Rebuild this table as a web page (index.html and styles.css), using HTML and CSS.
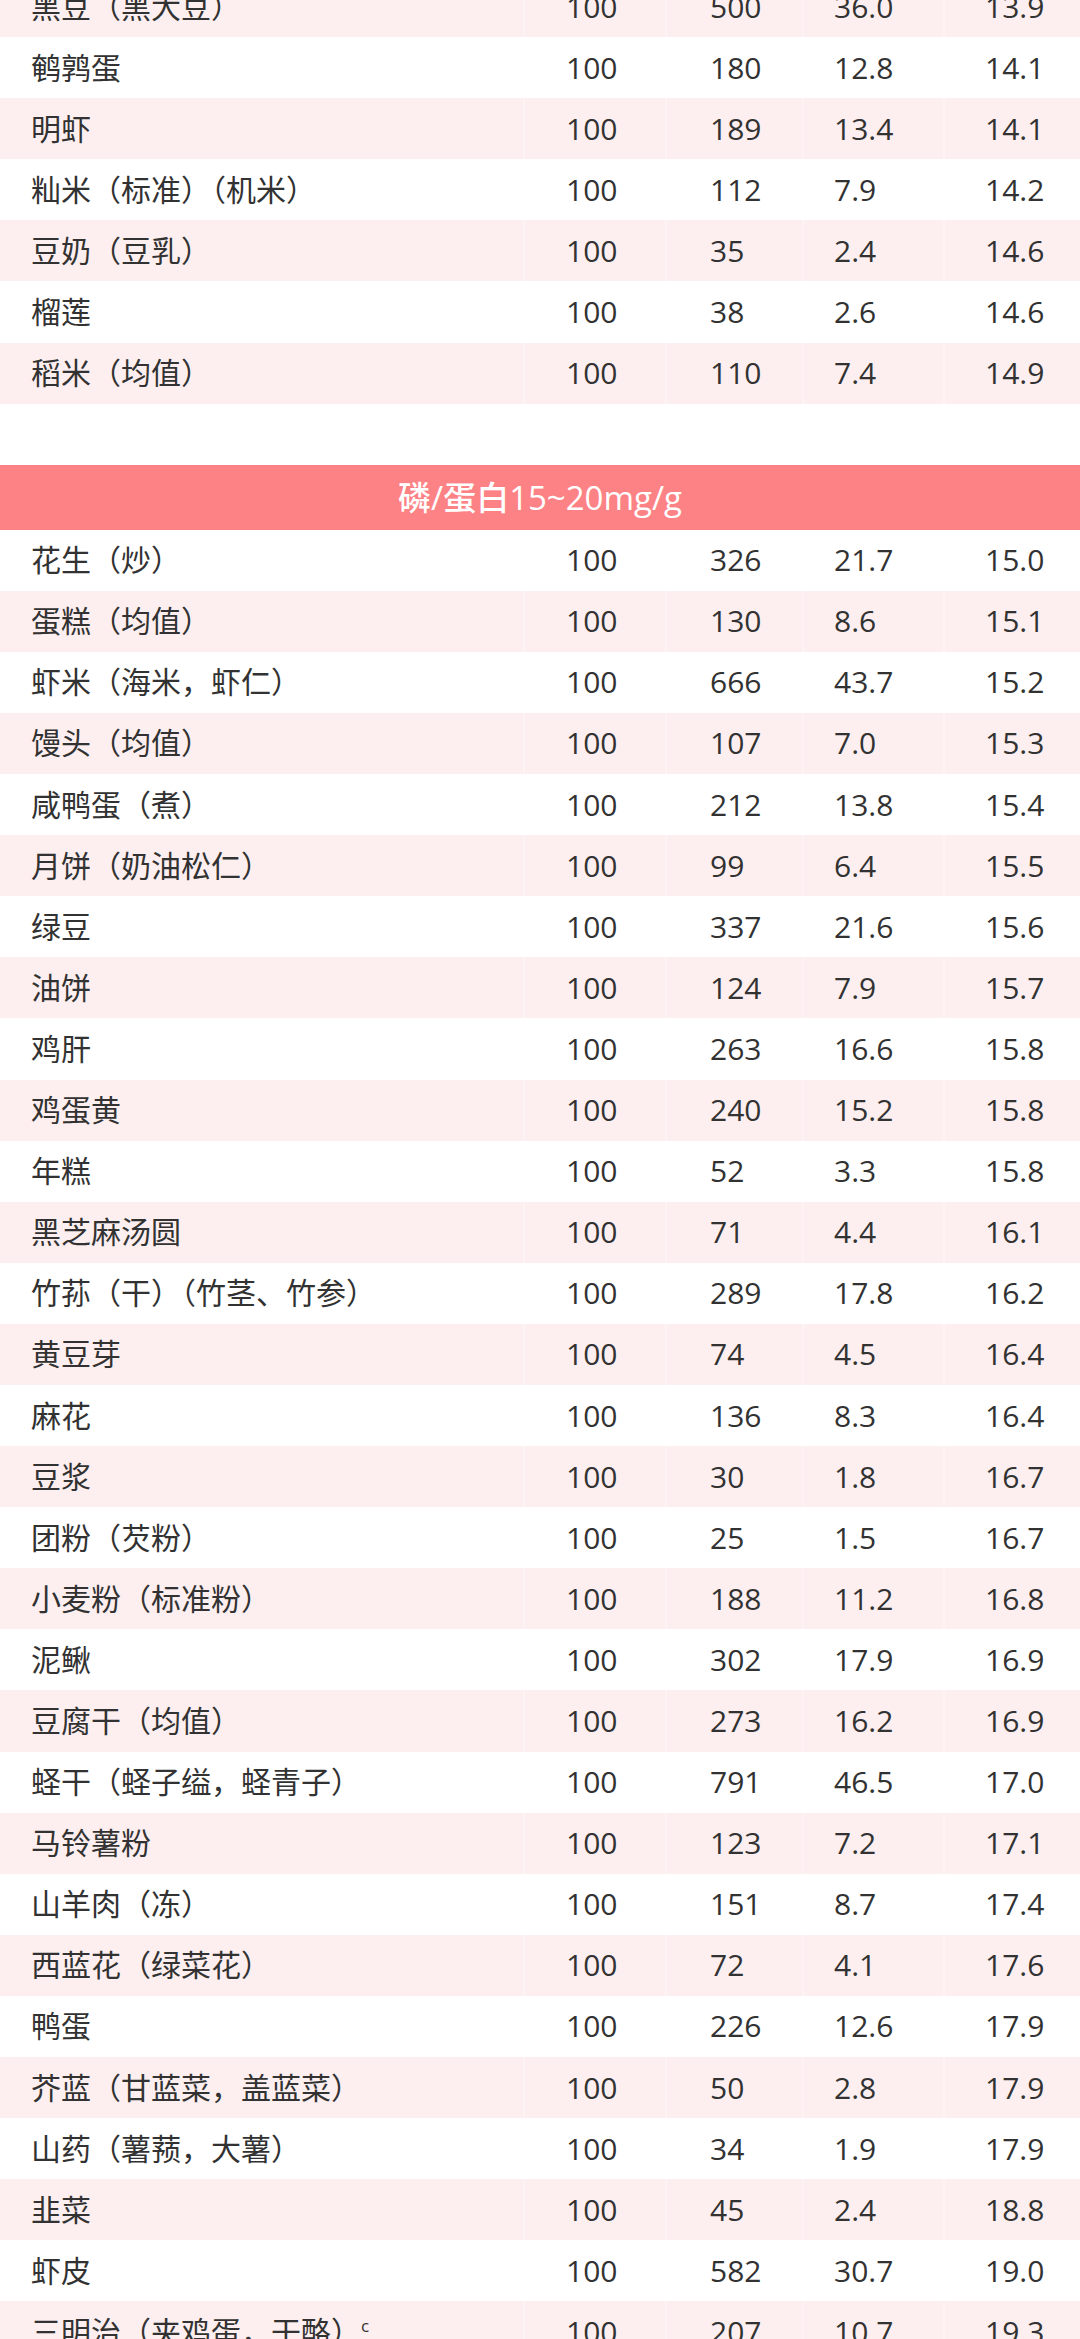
FILE: index.html
```html
<!DOCTYPE html>
<html lang="zh-CN">
<head>
<meta charset="utf-8">
<title>磷/蛋白比值表</title>
<link rel="stylesheet" href="styles.css">
</head>
<body>
<div class="page">
  <div class="table table-top">
    <div class="row pink"><div class="c name">黑豆（黑大豆）</div><div class="c c2">100</div><div class="c c3">500</div><div class="c c4">36.0</div><div class="c c5">13.9</div></div>
    <div class="row"><div class="c name">鹌鹑蛋</div><div class="c c2">100</div><div class="c c3">180</div><div class="c c4">12.8</div><div class="c c5">14.1</div></div>
    <div class="row pink"><div class="c name">明虾</div><div class="c c2">100</div><div class="c c3">189</div><div class="c c4">13.4</div><div class="c c5">14.1</div></div>
    <div class="row"><div class="c name">籼米（标准）（机米）</div><div class="c c2">100</div><div class="c c3">112</div><div class="c c4">7.9</div><div class="c c5">14.2</div></div>
    <div class="row pink"><div class="c name">豆奶（豆乳）</div><div class="c c2">100</div><div class="c c3">35</div><div class="c c4">2.4</div><div class="c c5">14.6</div></div>
    <div class="row"><div class="c name">榴莲</div><div class="c c2">100</div><div class="c c3">38</div><div class="c c4">2.6</div><div class="c c5">14.6</div></div>
    <div class="row pink"><div class="c name">稻米（均值）</div><div class="c c2">100</div><div class="c c3">110</div><div class="c c4">7.4</div><div class="c c5">14.9</div></div>
  </div>

  <div class="section-head">磷/蛋白15~20mg/g</div>

  <div class="table">
    <div class="row"><div class="c name">花生（炒）</div><div class="c c2">100</div><div class="c c3">326</div><div class="c c4">21.7</div><div class="c c5">15.0</div></div>
    <div class="row pink"><div class="c name">蛋糕（均值）</div><div class="c c2">100</div><div class="c c3">130</div><div class="c c4">8.6</div><div class="c c5">15.1</div></div>
    <div class="row"><div class="c name">虾米（海米，虾仁）</div><div class="c c2">100</div><div class="c c3">666</div><div class="c c4">43.7</div><div class="c c5">15.2</div></div>
    <div class="row pink"><div class="c name">馒头（均值）</div><div class="c c2">100</div><div class="c c3">107</div><div class="c c4">7.0</div><div class="c c5">15.3</div></div>
    <div class="row"><div class="c name">咸鸭蛋（煮）</div><div class="c c2">100</div><div class="c c3">212</div><div class="c c4">13.8</div><div class="c c5">15.4</div></div>
    <div class="row pink"><div class="c name">月饼（奶油松仁）</div><div class="c c2">100</div><div class="c c3">99</div><div class="c c4">6.4</div><div class="c c5">15.5</div></div>
    <div class="row"><div class="c name">绿豆</div><div class="c c2">100</div><div class="c c3">337</div><div class="c c4">21.6</div><div class="c c5">15.6</div></div>
    <div class="row pink"><div class="c name">油饼</div><div class="c c2">100</div><div class="c c3">124</div><div class="c c4">7.9</div><div class="c c5">15.7</div></div>
    <div class="row"><div class="c name">鸡肝</div><div class="c c2">100</div><div class="c c3">263</div><div class="c c4">16.6</div><div class="c c5">15.8</div></div>
    <div class="row pink"><div class="c name">鸡蛋黄</div><div class="c c2">100</div><div class="c c3">240</div><div class="c c4">15.2</div><div class="c c5">15.8</div></div>
    <div class="row"><div class="c name">年糕</div><div class="c c2">100</div><div class="c c3">52</div><div class="c c4">3.3</div><div class="c c5">15.8</div></div>
    <div class="row pink"><div class="c name">黑芝麻汤圆</div><div class="c c2">100</div><div class="c c3">71</div><div class="c c4">4.4</div><div class="c c5">16.1</div></div>
    <div class="row"><div class="c name">竹荪（干）（竹茎、竹参）</div><div class="c c2">100</div><div class="c c3">289</div><div class="c c4">17.8</div><div class="c c5">16.2</div></div>
    <div class="row pink"><div class="c name">黄豆芽</div><div class="c c2">100</div><div class="c c3">74</div><div class="c c4">4.5</div><div class="c c5">16.4</div></div>
    <div class="row"><div class="c name">麻花</div><div class="c c2">100</div><div class="c c3">136</div><div class="c c4">8.3</div><div class="c c5">16.4</div></div>
    <div class="row pink"><div class="c name">豆浆</div><div class="c c2">100</div><div class="c c3">30</div><div class="c c4">1.8</div><div class="c c5">16.7</div></div>
    <div class="row"><div class="c name">团粉（芡粉）</div><div class="c c2">100</div><div class="c c3">25</div><div class="c c4">1.5</div><div class="c c5">16.7</div></div>
    <div class="row pink"><div class="c name">小麦粉（标准粉）</div><div class="c c2">100</div><div class="c c3">188</div><div class="c c4">11.2</div><div class="c c5">16.8</div></div>
    <div class="row"><div class="c name">泥鳅</div><div class="c c2">100</div><div class="c c3">302</div><div class="c c4">17.9</div><div class="c c5">16.9</div></div>
    <div class="row pink"><div class="c name">豆腐干（均值）</div><div class="c c2">100</div><div class="c c3">273</div><div class="c c4">16.2</div><div class="c c5">16.9</div></div>
    <div class="row"><div class="c name">蛏干（蛏子缢，蛏青子）</div><div class="c c2">100</div><div class="c c3">791</div><div class="c c4">46.5</div><div class="c c5">17.0</div></div>
    <div class="row pink"><div class="c name">马铃薯粉</div><div class="c c2">100</div><div class="c c3">123</div><div class="c c4">7.2</div><div class="c c5">17.1</div></div>
    <div class="row"><div class="c name">山羊肉（冻）</div><div class="c c2">100</div><div class="c c3">151</div><div class="c c4">8.7</div><div class="c c5">17.4</div></div>
    <div class="row pink"><div class="c name">西蓝花（绿菜花）</div><div class="c c2">100</div><div class="c c3">72</div><div class="c c4">4.1</div><div class="c c5">17.6</div></div>
    <div class="row"><div class="c name">鸭蛋</div><div class="c c2">100</div><div class="c c3">226</div><div class="c c4">12.6</div><div class="c c5">17.9</div></div>
    <div class="row pink"><div class="c name">芥蓝（甘蓝菜，盖蓝菜）</div><div class="c c2">100</div><div class="c c3">50</div><div class="c c4">2.8</div><div class="c c5">17.9</div></div>
    <div class="row"><div class="c name">山药（薯蓣，大薯）</div><div class="c c2">100</div><div class="c c3">34</div><div class="c c4">1.9</div><div class="c c5">17.9</div></div>
    <div class="row pink"><div class="c name">韭菜</div><div class="c c2">100</div><div class="c c3">45</div><div class="c c4">2.4</div><div class="c c5">18.8</div></div>
    <div class="row"><div class="c name">虾皮</div><div class="c c2">100</div><div class="c c3">582</div><div class="c c4">30.7</div><div class="c c5">19.0</div></div>
    <div class="row pink"><div class="c name">三明治（夹鸡蛋，干酪）<sup class="note">c</sup></div><div class="c c2">100</div><div class="c c3">207</div><div class="c c4">10.7</div><div class="c c5">19.3</div></div>
  </div>
</div>
</body>
</html>
```

FILE: styles.css
```css
html, body {
  margin: 0;
  padding: 0;
  background: #ffffff;
}

.page {
  width: 1080px;
  font-family: "Open Sans", "Noto Sans CJK SC", sans-serif;
  color: #323232;
  overflow: hidden;
}

.table {
  display: flex;
  flex-direction: column;
}

.table-top {
  margin-top: -24px;
  margin-bottom: 61px;
}

.row {
  display: grid;
  grid-template-columns: 523px 142px 137px 141px 1fr;
  height: 61.1px;
  align-items: center;
  font-size: 30px;
  line-height: 1;
}

.c {
  box-sizing: border-box;
  height: 100%;
  display: flex;
  align-items: center;
  white-space: nowrap;
}

.name { padding-left: 31px; }
.c2 { padding-left: 43px; }
.c3 { padding-left: 45px; }
.c4 { padding-left: 32px; }
.c5 { padding-left: 42px; }

.row.pink .c {
  background: #fdeff0;
}

.row.pink .c2,
.row.pink .c3,
.row.pink .c4,
.row.pink .c5 {
  box-shadow: inset 2px 0 0 #fdf3f4;
}

.note {
  font-size: 17px;
  line-height: 0;
  margin-left: 0;
  position: relative;
  top: -6px;
}

.section-head {
  height: 65px;
  background: #fd8285;
  color: #ffffff;
  font-size: 33px;
  font-weight: 500;
  display: flex;
  align-items: center;
  justify-content: center;
  line-height: 1;
}
```
